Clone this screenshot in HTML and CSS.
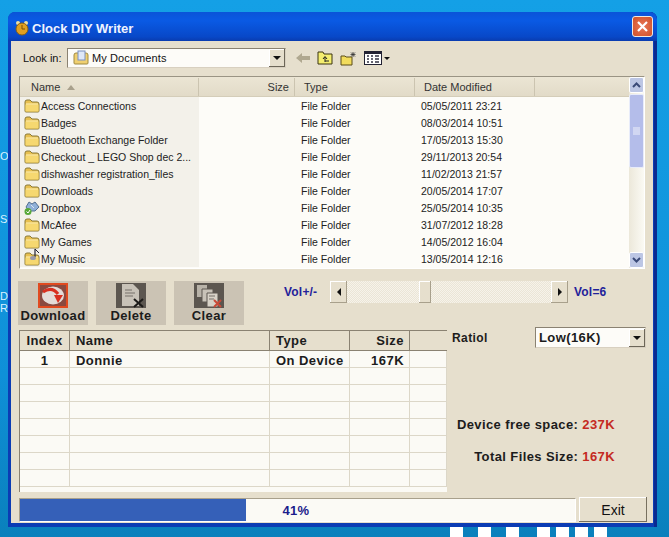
FILE: index.html
```html
<!DOCTYPE html>
<html lang="en">
<head>
    <meta charset="UTF-8">
    <title>Clock DIY Writer</title>
    <link rel="stylesheet" href="styles.css">
</head>
<body>
    <svg class="defs" width="0" height="0">
        <symbol id="folder" viewBox="0 0 16 14">
            <path d="M1 3 Q1 1 3 1 H6 L8 3 H13 Q15 3 15 5 V12 Q15 13 14 13 H2 Q1 13 1 12 Z" fill="#e8c050" stroke="#8a7a3a"/>
            <path d="M1.5 5.5 H14.5 V12.5 H1.5 Z" fill="#f6d870"/>
            <path d="M2 5 H14" stroke="#fff2b8"/>
        </symbol>
    </svg>

    <!-- bits of the desktop behind the window -->
    <div class="desk-label desk-o">O</div>
    <div class="desk-label desk-s">S:</div>
    <div class="desk-label desk-d">D<br>Re</div>
    <div class="stripes">
        <span></span><span></span><span></span><span></span><span></span><span></span><span></span>
    </div>

    <div class="window">
        <div class="titlebar">
            <svg class="clock" width="14" height="16" viewBox="0 0 14 16">
                <circle cx="3" cy="3" r="2" fill="#f0e0a0"/>
                <circle cx="11" cy="3" r="2" fill="#f0e0a0"/>
                <circle cx="7" cy="9" r="6" fill="#e0a020" stroke="#8a6010"/>
                <path d="M7 5V9H10" stroke="#7a5008" fill="none"/>
            </svg>
            <span class="title">Clock DIY Writer</span>
            <div class="close">
                <svg width="13" height="13" viewBox="0 0 13 13"><path d="M2 2 11 11M11 2 2 11" stroke="#fff" stroke-width="2.2"/></svg>
            </div>
        </div>

        <div class="client">
            <div class="lookin">
                <label class="lookin-label">Look in:</label>
                <div class="combo">
                    <svg class="combo-icon" width="16" height="16" viewBox="0 0 16 16">
                        <path d="M1 5 Q1 3 3 3 H13 Q15 3 15 5 V13 Q15 14 14 14 H2 Q1 14 1 13 Z" fill="#f0d070" stroke="#a08a40"/>
                        <rect x="5" y="1" width="7" height="9" fill="#dfe8f8" stroke="#7a90c0"/>
                    </svg>
                    <span class="combo-text">My Documents</span>
                    <div class="combo-arrow"><i></i></div>
                </div>
                <div class="nav-icons">
                    <svg width="14" height="12" viewBox="0 0 14 12"><path d="M0 6 6 1V4H14V8H6V11Z" fill="#b0a890"/></svg>
                    <svg width="16" height="14" viewBox="0 0 16 14">
                        <path d="M1 3V1H6L7 3H15V13H1Z" fill="#f4ee70" stroke="#3a3410"/>
                        <path d="M8 11V6M6 8 8 5.500 10 8M8 10H12" stroke="#222" fill="none"/>
                    </svg>
                    <svg width="17" height="15" viewBox="0 0 17 15">
                        <path d="M1 5H5L6 6H12V14H1Z" fill="#f2dc5c" stroke="#5a4c18"/>
                        <path d="M13 1V6M10.500 3.500H15.500M11 1.500 15 5.500M15 1.500 11 5.500" stroke="#333" stroke-width=".8"/>
                    </svg>
                    <div class="views">
                        <svg width="18" height="14" viewBox="0 0 18 14">
                            <rect x=".5" y=".5" width="17" height="13" fill="#fff" stroke="#223"/>
                            <path d="M1 2H17" stroke="#223" stroke-width="2"/>
                            <path d="M3 5H5M7 5H9M11 5H15M3 8H5M7 8H9M11 8H15M3 11H5M7 11H9M11 11H15" stroke="#334" stroke-width="1.600"/>
                        </svg>
                        <i class="views-arrow"></i>
                    </div>
                </div>
            </div>

            <div class="filelist">
                <div class="files">
                    <div class="fhead">
                        <div class="fh fh-name">Name <i class="sort-arrow"></i></div>
                        <div class="fh fh-size">Size</div>
                        <div class="fh fh-type">Type</div>
                        <div class="fh fh-date">Date Modified</div>
                        <div class="fh fh-rest"></div>
                    </div>
                    <div class="frow"><div class="f-name"><svg class="ficon"><use href="#folder"/></svg>Access Connections</div><div class="f-type">File Folder</div><div class="f-date">05/05/2011 23:21</div></div>
                    <div class="frow"><div class="f-name"><svg class="ficon"><use href="#folder"/></svg>Badges</div><div class="f-type">File Folder</div><div class="f-date">08/03/2014 10:51</div></div>
                    <div class="frow"><div class="f-name"><svg class="ficon"><use href="#folder"/></svg>Bluetooth Exchange Folder</div><div class="f-type">File Folder</div><div class="f-date">17/05/2013 15:30</div></div>
                    <div class="frow"><div class="f-name"><svg class="ficon"><use href="#folder"/></svg>Checkout _ LEGO Shop dec 2...</div><div class="f-type">File Folder</div><div class="f-date">29/11/2013 20:54</div></div>
                    <div class="frow"><div class="f-name"><svg class="ficon"><use href="#folder"/></svg>dishwasher registration_files</div><div class="f-type">File Folder</div><div class="f-date">11/02/2013 21:57</div></div>
                    <div class="frow"><div class="f-name"><svg class="ficon"><use href="#folder"/></svg>Downloads</div><div class="f-type">File Folder</div><div class="f-date">20/05/2014 17:07</div></div>
                    <div class="frow"><div class="f-name">
                        <svg class="ficon" viewBox="0 0 16 14">
                            <path d="M2 6 5 1 8 3 11 1 15 6 11 10H5Z" fill="#8fb0d8" stroke="#55708f"/>
                            <path d="M7 4 10 7" stroke="#d8e4f0"/>
                            <circle cx="4" cy="10.500" r="3.500" fill="#58a838"/>
                            <path d="M2.500 10.500 4 12 6 9" stroke="#fff" fill="none"/>
                        </svg>Dropbox</div><div class="f-type">File Folder</div><div class="f-date">25/05/2014 10:35</div></div>
                    <div class="frow"><div class="f-name"><svg class="ficon"><use href="#folder"/></svg>McAfee</div><div class="f-type">File Folder</div><div class="f-date">31/07/2012 18:28</div></div>
                    <div class="frow"><div class="f-name"><svg class="ficon"><use href="#folder"/></svg>My Games</div><div class="f-type">File Folder</div><div class="f-date">14/05/2012 16:04</div></div>
                    <div class="frow"><div class="f-name">
                        <span class="music">
                            <svg class="ficon"><use href="#folder"/></svg>
                            <svg class="note" width="10" height="12" viewBox="0 0 10 12"><path d="M5 0V8" stroke="#223" stroke-width="1.200"/><path d="M5 0 9 4" stroke="#223"/><ellipse cx="3" cy="9" rx="3" ry="2" fill="#99a"/></svg>
                        </span>My Music</div><div class="f-type">File Folder</div><div class="f-date">13/05/2014 12:16</div></div>
                </div>
                <div class="vscroll">
                    <div class="vbtn">
                        <svg width="9" height="6" viewBox="0 0 9 6"><path d="M1 5 4.500 1.500 8 5" stroke="#3a4a78" stroke-width="2" fill="none"/></svg>
                    </div>
                    <div class="vthumb">
                        <svg width="7" height="8" viewBox="0 0 7 8"><path d="M0 1H7M0 3H7M0 5H7M0 7H7" stroke="#eef0fa"/></svg>
                    </div>
                    <div class="vtrack"></div>
                    <div class="vbtn">
                        <svg width="9" height="6" viewBox="0 0 9 6"><path d="M1 1 4.500 4.500 8 1" stroke="#3a4a78" stroke-width="2" fill="none"/></svg>
                    </div>
                </div>
            </div>

            <div class="tools">
                <div class="tool">
                    <svg class="tool-icon" width="30" height="25" viewBox="0 0 30 25">
                        <rect x="1" y="1" width="28" height="23" fill="#8a4a40" stroke="#e04a20" stroke-width="2"/>
                        <ellipse cx="15" cy="12.500" rx="11" ry="9" fill="#e4dcd8"/>
                        <path d="M5 9Q14 3 20 11" stroke="#d83020" stroke-width="3" fill="none"/>
                        <path d="M16 12H25L20 20Z" fill="#d83020"/>
                    </svg>
                    <span class="tool-label">Download</span>
                </div>
                <div class="tool">
                    <svg class="tool-icon" width="30" height="25" viewBox="0 0 30 25">
                        <rect width="30" height="25" fill="#5c5650"/>
                        <path d="M6 1H17L23 7V23H6Z" fill="#c8c2b8"/>
                        <path d="M9 7H16M9 10H19M9 13H17" stroke="#77716a"/>
                        <path d="M18 16 27 24M27 16 18 24" stroke="#1c1a18" stroke-width="2"/>
                    </svg>
                    <span class="tool-label">Delete</span>
                </div>
                <div class="tool">
                    <svg class="tool-icon" width="30" height="25" viewBox="0 0 30 25">
                        <rect width="30" height="25" fill="#5c5650"/>
                        <path d="M3 2H13V14H3Z" fill="#b8b2a8"/>
                        <path d="M8 6H19V19H8Z" fill="#c8c2b8" stroke="#5c5650"/>
                        <path d="M13 10H24V24H13Z" fill="#d8d2c8" stroke="#5c5650"/>
                        <path d="M15 13H21M15 16H20" stroke="#77716a"/>
                        <path d="M20 17 27 24M27 17 20 24" stroke="#c84a38" stroke-width="2"/>
                    </svg>
                    <span class="tool-label">Clear</span>
                </div>
                <div class="volume">
                    <span class="vol-text vol-minus">Vol+/-</span>
                    <div class="hscroll">
                        <div class="hbtn"><i class="arrow-left"></i></div>
                        <div class="hpart hpart-left"></div>
                        <div class="hthumb"></div>
                        <div class="hpart hpart-right"></div>
                        <div class="hbtn"><i class="arrow-right"></i></div>
                    </div>
                    <span class="vol-text">Vol=6</span>
                </div>
            </div>

            <div class="lower">
                <div class="tracks">
                    <div class="trow thead">
                        <div class="c-index">Index</div>
                        <div class="c-name">Name</div>
                        <div class="c-type">Type</div>
                        <div class="c-size">Size</div>
                        <div class="c-rest"></div>
                    </div>
                    <div class="trow">
                        <div class="c-index">1</div>
                        <div class="c-name">Donnie</div>
                        <div class="c-type">On Device</div>
                        <div class="c-size">167K</div>
                        <div class="c-rest"></div>
                    </div>
                    <div class="trow"><div class="c-index"></div><div class="c-name"></div><div class="c-type"></div><div class="c-size"></div><div class="c-rest"></div></div>
                    <div class="trow"><div class="c-index"></div><div class="c-name"></div><div class="c-type"></div><div class="c-size"></div><div class="c-rest"></div></div>
                    <div class="trow"><div class="c-index"></div><div class="c-name"></div><div class="c-type"></div><div class="c-size"></div><div class="c-rest"></div></div>
                    <div class="trow"><div class="c-index"></div><div class="c-name"></div><div class="c-type"></div><div class="c-size"></div><div class="c-rest"></div></div>
                    <div class="trow"><div class="c-index"></div><div class="c-name"></div><div class="c-type"></div><div class="c-size"></div><div class="c-rest"></div></div>
                    <div class="trow"><div class="c-index"></div><div class="c-name"></div><div class="c-type"></div><div class="c-size"></div><div class="c-rest"></div></div>
                    <div class="trow"><div class="c-index"></div><div class="c-name"></div><div class="c-type"></div><div class="c-size"></div><div class="c-rest"></div></div>
                </div>
                <div class="side">
                    <div class="ratio">
                        <span class="ratio-label">Ratiol</span>
                        <div class="ratio-select">
                            <span class="ratio-value">Low(16K)</span>
                            <div class="combo-arrow"><i></i></div>
                        </div>
                    </div>
                    <div class="stats">
                        <div class="stat">Device free space: <b class="stat-value">237K</b></div>
                        <div class="stat">Total Files Size: <b class="stat-value">167K</b></div>
                    </div>
                </div>
            </div>

            <div class="bottom">
                <div class="progress">
                    <div class="progress-fill"></div>
                    <span class="progress-text">41%</span>
                </div>
                <div class="exit">Exit</div>
            </div>
        </div>
    </div>
</body>
</html>
```

FILE: styles.css
```css
html, body {
    height: 100%;
}

body {
    margin: 0;
    overflow: hidden;
    position: relative;
    background: linear-gradient(#14a0e6, #0f90d8 70%, #0a80bc);
    font-family: "Liberation Sans", Arial, sans-serif;
    color: #111;
}

.defs {
    position: absolute;
}

/* desktop leftovers */
.desk-label {
    position: absolute;
    left: 0;
    color: #d8f0ff;
    font-size: 11px;
    line-height: 12px;
}

.desk-o { top: 150px; }
.desk-s { top: 213px; }
.desk-d { top: 290px; }

.stripes {
    position: absolute;
    left: 450px;
    top: 527px;
    display: flex;
}

.stripes span {
    width: 13px;
    height: 10px;
    margin-right: 15px;
    background: #fff;
}

.stripes span:nth-child(3) {
    margin-right: 18px;
}

.stripes span:nth-child(n+4) {
    margin-right: 6px;
}

/* window */
.window {
    position: relative;
    width: 642px;
    margin: 12px 0 0 8px;
    padding: 0 4px 4px 3px;
    background: #0b3cb4;
    border-radius: 7px 7px 0 0;
    box-shadow: inset -3px 0 #0a2a90;
}

.titlebar {
    height: 29px;
    display: flex;
    align-items: center;
    background: linear-gradient(#0a54d8, #0a5ae4 30%, #0848c8 85%, #0a3cb0);
    margin: 0 -4px 0 -3px;
    padding: 0 4px 0 7px;
    border-radius: 7px 7px 0 0;
}

.clock {
    margin: 3px 3px 0 0;
}

.title {
    flex: 1;
    margin-top: 3px;
    color: #f0f4ff;
    font-size: 13px;
    font-weight: bold;
}

.close {
    width: 19px;
    height: 19px;
    display: flex;
    align-items: center;
    justify-content: center;
    background: radial-gradient(circle, #e87858, #d05028);
    border: 1px solid #f0e8e0;
    border-radius: 3px;
}

.client {
    height: 482px;
    background: #e6dfcd;
    box-sizing: border-box;
    padding-top: 7px;
}

/* look in row */
.lookin {
    height: 20px;
    display: flex;
    align-items: center;
    padding-left: 12px;
}

.lookin-label {
    width: 44px;
    font-size: 11px;
}

.combo {
    width: 219px;
    height: 20px;
    box-sizing: border-box;
    display: flex;
    align-items: center;
    background: #fdfcf8;
    border: 1px solid #8a8272;
    border-right-color: #d8d0c0;
    border-bottom-color: #d8d0c0;
}

.combo-icon {
    margin: 0 3px 0 5px;
}

.combo-text {
    flex: 1;
    font-size: 11px;
    letter-spacing: .1px;
}

.combo-arrow {
    width: 16px;
    height: 18px;
    display: flex;
    align-items: center;
    justify-content: center;
    background: #e6dfcd;
    box-shadow: inset -1px -1px #6c6658, inset 1px 1px #fff;
}

.combo-arrow i {
    border: 4px solid transparent;
    border-top-color: #111;
    border-bottom: 0;
}

.nav-icons {
    display: flex;
    align-items: center;
    margin-left: 10px;
    gap: 7px;
}

.views {
    display: flex;
    align-items: center;
    gap: 2px;
}

.views-arrow {
    border: 3px solid transparent;
    border-top-color: #111;
    border-bottom: 0;
}

/* file list */
.filelist {
    width: 626px;
    height: 193px;
    margin: 8px 0 0 8px;
    box-sizing: border-box;
    display: flex;
    background: #fdfcf8;
    border: 1px solid #9a9484;
    border-right-color: #fff;
    border-bottom-color: #fff;
}

.files {
    flex: 1;
    min-width: 0;
    font-size: 10.500px;
}

.fhead {
    height: 20px;
    padding-top: 1px;
    display: flex;
    background: linear-gradient(#ebe5d4, #e2dbc8);
    border-bottom: 1px solid #d4cdb9;
    box-sizing: border-box;
    color: #333;
    font-size: 11px;
}

.fh {
    display: flex;
    align-items: center;
    box-sizing: border-box;
    border-right: 1px solid #cbc4b0;
}

.fh-name { width: 179px; padding-left: 11px; }
.fh-size { width: 96px; justify-content: flex-end; padding-right: 5px; }
.fh-type { width: 120px; padding-left: 9px; }
.fh-date { width: 120px; padding-left: 9px; }
.fh-rest { flex: 1; border-right: 0; }

.sort-arrow {
    margin-left: 7px;
    border: 4px solid transparent;
    border-bottom: 5px solid #a8a08c;
    border-top: 0;
}

.frow {
    height: 17px;
    display: flex;
    align-items: center;
}

.f-name {
    width: 179px;
    height: 17px;
    flex-shrink: 0;
    box-sizing: border-box;
    display: flex;
    align-items: center;
    padding-left: 4px;
    background: #f3f1ea;
    white-space: nowrap;
    color: #222;
}

.ficon {
    width: 16px;
    height: 14px;
    margin-right: 1px;
    flex-shrink: 0;
}

.music {
    position: relative;
    display: flex;
}

.note {
    position: absolute;
    left: 6px;
    top: -3px;
}

.f-type {
    width: 120px;
    margin-left: 102px;
    color: #222;
}

.f-date {
    margin-left: -6px;
    padding-left: 6px;
    color: #222;
}

.vscroll {
    width: 15px;
    display: flex;
    flex-direction: column;
    background: linear-gradient(90deg, #ece8da, #fbfaf4);
}

.vbtn {
    height: 16px;
    display: flex;
    align-items: center;
    justify-content: center;
    background: #bcc6e4;
    border: 1px solid #fff;
    border-radius: 2px;
    box-sizing: border-box;
}

.vthumb {
    height: 74px;
    margin-top: 1px;
    display: flex;
    align-items: center;
    justify-content: center;
    background: #b4bdea;
    border: 1px solid #e8ecfa;
    border-radius: 2px;
    box-sizing: border-box;
}

.vtrack {
    flex: 1;
}

/* buttons and volume */
.tools {
    display: flex;
    height: 44px;
    margin-top: 12px;
    padding-left: 7px;
}

.tool {
    width: 70px;
    margin-right: 8px;
    display: flex;
    flex-direction: column;
    align-items: center;
    background: #cbc3b4;
    padding-top: 2px;
    box-sizing: border-box;
}

.tool-label {
    font-size: 13px;
    line-height: 15px;
    font-weight: bold;
    letter-spacing: .35px;
    color: #1c1c1c;
}

.volume {
    height: 22px;
    display: flex;
    align-items: center;
    margin-left: 32px;
}

.vol-text {
    font-size: 12px;
    font-weight: bold;
    color: #22229a;
    letter-spacing: .2px;
}

.vol-minus {
    width: 46px;
}

.hscroll {
    width: 238px;
    height: 22px;
    display: flex;
    margin-right: 6px;
}

.hbtn {
    width: 17px;
    display: flex;
    align-items: center;
    justify-content: center;
    background: #e6dfcd;
    box-shadow: inset -1px -1px #a8a08c, inset 1px 1px #fff;
}

.arrow-left {
    border: 4px solid transparent;
    border-right-color: #111;
    border-left: 0;
}

.arrow-right {
    border: 4px solid transparent;
    border-left-color: #111;
    border-right: 0;
}

.hpart {
    background: conic-gradient(#ebe5d6 25%, #f6f3ea 0 50%, #ebe5d6 0 75%, #f6f3ea 0) 0 0 / 2px 2px;
}

.hpart-left { width: 72px; }
.hpart-right { flex: 1; }

.hthumb {
    width: 12px;
    background: #e6dfcd;
    box-shadow: inset -1px -1px #a8a08c, inset 1px 1px #fff;
}

/* track table and side panel */
.lower {
    display: flex;
    margin-top: 5px;
    padding-left: 8px;
}

.tracks {
    width: 428px;
    height: 162px;
    overflow: hidden;
    box-sizing: border-box;
    background: #fbfaf5;
    border-top: 1px solid #8a8272;
    border-left: 1px solid #8a8272;
    font-size: 13px;
    font-weight: bold;
    letter-spacing: .45px;
    color: #1c1c1c;
}

.trow {
    height: 17px;
    display: flex;
    box-sizing: border-box;
    border-bottom: 1px solid #dcd7c8;
    line-height: 19px;
}

.trow > div {
    box-sizing: border-box;
    border-right: 1px solid #dcd7c8;
}

.thead {
    height: 20px;
    background: #e6dfcd;
    border-bottom: 1px solid #8a8272;
    line-height: 19px;
}

.thead > div {
    border-right: 1px solid #8a8272;
}

.c-index { width: 50px; text-align: center; }
.c-name { width: 200px; padding-left: 6px; }
.c-type { width: 80px; padding-left: 6px; }
.c-size { width: 60px; text-align: right; padding-right: 5px; }
.c-rest { flex: 1; }

.thead .c-rest {
    border-right: 0;
}

.side {
    flex: 1;
    font-size: 13px;
    font-weight: bold;
    letter-spacing: .4px;
    color: #1c1c1c;
}

.ratio {
    display: flex;
    align-items: flex-start;
    padding: 0 0 0 5px;
}

.ratio-label {
    width: 83px;
    margin-top: 1px;
    font-size: 12px;
}

.ratio-select {
    width: 111px;
    height: 21px;
    margin-top: -3px;
    box-sizing: border-box;
    display: flex;
    align-items: center;
    background: #fdfcf8;
    border: 1px solid #8a8272;
    border-right-color: #d8d0c0;
    border-bottom-color: #d8d0c0;
}

.ratio-value {
    flex: 1;
    padding-left: 3px;
}

.stats {
    width: 168px;
    margin-top: 69px;
    text-align: right;
}

.stat {
    height: 32px;
    line-height: 16px;
}

.stat-value {
    color: #c42a22;
}

/* progress and exit */
.bottom {
    display: flex;
    height: 25px;
    margin-top: 5px;
    padding-left: 8px;
}

.progress {
    width: 557px;
    height: 24px;
    margin-top: 1px;
    position: relative;
    display: flex;
    background: #fbfaf5;
    border: 1px solid #a8a08c;
    border-right-color: #fff;
    border-bottom-color: #fff;
    box-sizing: border-box;
}

.progress-fill {
    width: 40.800%;
    background: #3560b8;
}

.progress-text {
    margin-left: 36px;
    line-height: 24px;
    font-size: 13px;
    font-weight: bold;
    color: #1c1c8c;
    letter-spacing: .3px;
}

.exit {
    width: 68px;
    margin-left: 3px;
    display: flex;
    align-items: center;
    justify-content: center;
    background: #e6dfcd;
    box-shadow: inset -1px -1px #77705f, inset 1px 1px #fff;
    font-size: 14px;
}
```
